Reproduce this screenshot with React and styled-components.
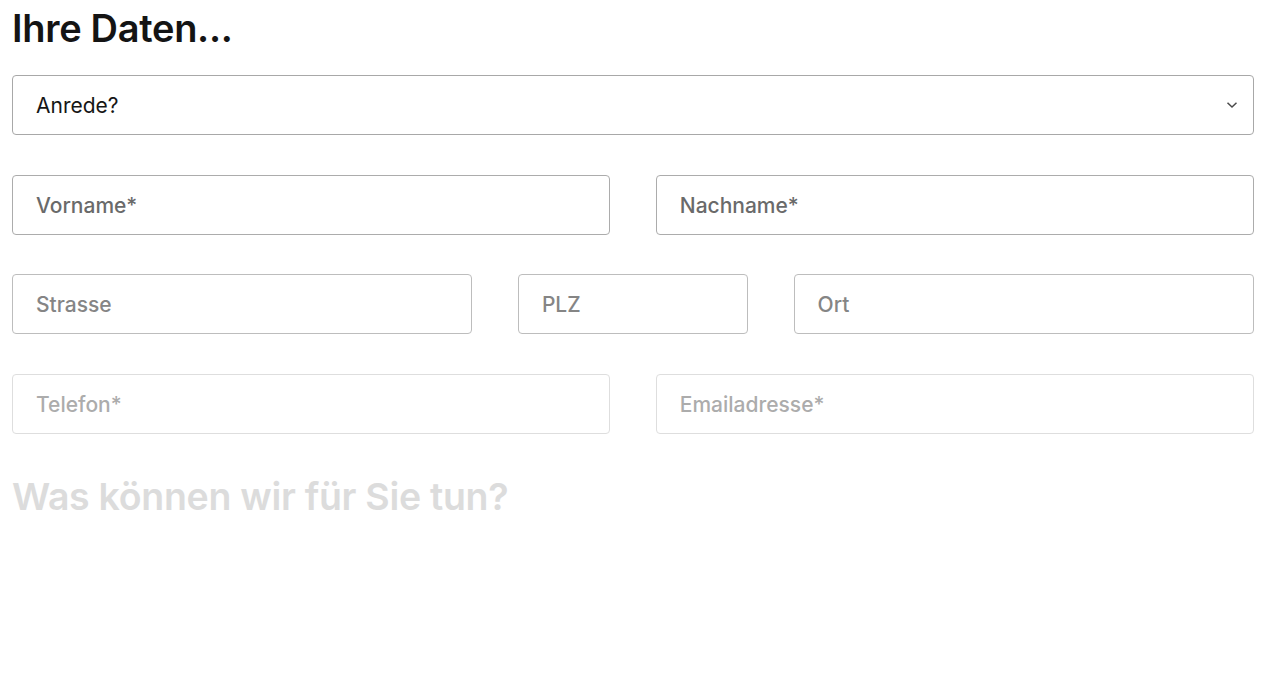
import React from "react";
import styled, { createGlobalStyle } from "styled-components";

const Global = createGlobalStyle`
  html, body { margin: 0; padding: 0; background: #fff; }
  body { font-family: Inter, "Noto Sans", sans-serif; }
  * { box-sizing: border-box; }
`;

const Form = styled.form`
  width: 1242px;
  margin-left: 12px;
  padding-top: 6px;
  display: flex;
  flex-direction: column;
`;

const Title = styled.h2`
  margin: 0 0 25px;
  font-size: ${(p) => p.$size || 38}px;
  line-height: 44px;
  font-weight: 600;
  letter-spacing: -0.3px;
  color: ${(p) => p.$color};
`;

const Fields = styled.div`
  display: flex;
  flex-direction: column;
  gap: 39.6px;
  margin-bottom: 41px;
`;

const Row = styled.div`
  display: grid;
  grid-template-columns: ${(p) => p.$cols};
  column-gap: 45.5px;
`;

const Field = styled.div`
  position: relative;
  height: 60px;
  border: 1px solid ${(p) => p.$border};
  border-radius: 4px;
  display: flex;
  align-items: center;
  padding: 1px 23px 0;
  font-size: 21px;
  font-weight: ${(p) => (p.$value ? 400 : 500)};
  color: ${(p) => p.$color};
  background: #fff;
`;

const Chevron = styled.svg`
  position: absolute;
  right: 15px;
  top: 50%;
  width: 12px;
  height: 8px;
  margin-top: -4px;
`;

export default function App() {
  return (
    <>
      <Global />
      <Form>
        <Title $color="#141414">Ihre Daten...</Title>
        <Fields>
          <Row $cols="1fr">
            <Field $value $border="#a8a8a8" $color="#161616">
              Anrede?
              <Chevron viewBox="0 0 12 8">
                <path d="M1.5 1.8 L6 6 L10.5 1.8" fill="none" stroke="#4a4a4a" strokeWidth="1.5" />
              </Chevron>
            </Field>
          </Row>
          <Row $cols="1fr 1fr">
            <Field $border="#acacac" $color="#6a6a6a">Vorname*</Field>
            <Field $border="#acacac" $color="#6a6a6a">Nachname*</Field>
          </Row>
          <Row $cols="2fr 1fr 2fr">
            <Field $border="#bdbdbd" $color="#858585">Strasse</Field>
            <Field $border="#bdbdbd" $color="#858585">PLZ</Field>
            <Field $border="#bdbdbd" $color="#858585">Ort</Field>
          </Row>
          <Row $cols="1fr 1fr">
            <Field $border="#dedede" $color="#acacac">Telefon*</Field>
            <Field $border="#dedede" $color="#acacac">Emailadresse*</Field>
          </Row>
        </Fields>
        <Title $size={37.5} $color="#dcdcdc">Was können wir für Sie tun?</Title>
      </Form>
    </>
  );
}
